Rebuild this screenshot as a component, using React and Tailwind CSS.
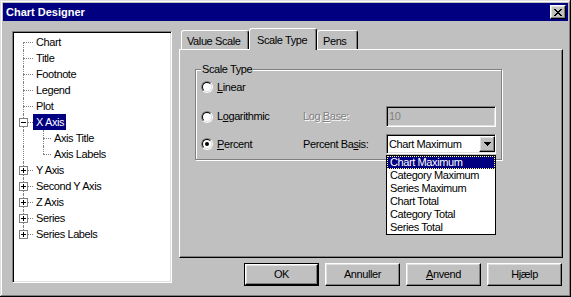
const raised =
  "bg-[#c0c0c0] border border-t-white border-l-white border-r-black border-b-black shadow-[inset_-1px_-1px_#808080,inset_1px_1px_#dfdfdf]";
const sunken =
  "border border-t-[#808080] border-l-[#808080] border-r-white border-b-white shadow-[inset_1px_1px_#000,inset_-1px_-1px_#dfdfdf]";

const treeItems = [
  { label: "Chart", first: true },
  { label: "Title" },
  { label: "Footnote" },
  { label: "Legend" },
  { label: "Plot" },
  { label: "X Axis", toggle: "minus", selected: true },
  { label: "Axis Title", child: true },
  { label: "Axis Labels", child: true, lastChild: true },
  { label: "Y Axis", toggle: "plus" },
  { label: "Second Y Axis", toggle: "plus" },
  { label: "Z Axis", toggle: "plus" },
  { label: "Series", toggle: "plus" },
  { label: "Series Labels", toggle: "plus", last: true }
];

const tabs = [
  { label: "Value Scale", width: "w-[68px]" },
  { label: "Scale Type", width: "w-[68px]", active: true },
  { label: "Pens", width: "w-[41px]" }
];

const basisOptions = [
  "Chart Maximum",
  "Category Maximum",
  "Series Maximum",
  "Chart Total",
  "Category Total",
  "Series Total"
];

// pixel rows of the close glyph: [y, x, width]
const closeGlyph = [
  [0, 0, 2], [0, 6, 2],
  [1, 1, 2], [1, 5, 2],
  [2, 2, 4],
  [3, 3, 2],
  [4, 2, 4],
  [5, 1, 2], [5, 5, 2],
  [6, 0, 2], [6, 6, 2]
];

function ToggleBox({ kind }) {
  return (
    <span className="absolute left-[5px] top-[4px] flex h-[9px] w-[9px] items-center justify-center border border-[#808080] bg-white">
      <svg width="5" height="5" viewBox="0 0 5 5" shapeRendering="crispEdges">
        <rect x="0" y="2" width="5" height="1" fill="#000" />
        {kind === "plus" && <rect x="2" y="0" width="1" height="5" fill="#000" />}
      </svg>
    </span>
  );
}

function TreeRow({ item }) {
  const rootLine = item.first
    ? "top-2 bottom-0"
    : item.last
      ? "top-0 h-2"
      : "top-0 bottom-0";

  return (
    <div className="flex h-4 items-center">
      <div className={`relative h-4 shrink-0 ${item.child ? "w-[37px]" : "w-[19px]"}`}>
        <span className={`absolute left-[9px] w-0 border-l border-dotted border-[#808080] ${rootLine}`} />
        {item.child ? (
          <>
            <span
              className={`absolute left-[29px] w-0 border-l border-dotted border-[#808080] ${item.lastChild ? "top-0 h-2" : "top-0 bottom-0"}`}
            />
            <span className="absolute left-[29px] top-2 w-[8px] border-t border-dotted border-[#808080]" />
          </>
        ) : (
          <span className="absolute left-[9px] top-2 w-[10px] border-t border-dotted border-[#808080]" />
        )}
        {item.toggle && <ToggleBox kind={item.toggle} />}
      </div>
      <span
        className={`flex h-4 items-center pl-[3px] pr-[2px] ${item.selected ? "bg-[#000080] text-white" : ""}`}
      >
        {item.label}
      </span>
    </div>
  );
}

function Radio({ checked }) {
  return (
    <span className="flex h-3 w-3 shrink-0 rounded-full border border-t-[#808080] border-l-[#808080] border-r-white border-b-white">
      <span className="flex h-full w-full items-center justify-center rounded-full border border-t-black border-l-black border-r-[#dfdfdf] border-b-[#dfdfdf] bg-white">
        {checked && <span className="h-1 w-1 rounded-full bg-black" />}
      </span>
    </span>
  );
}

function RadioLabel({ checked, before, mark, after, className = "" }) {
  return (
    <div className={`flex items-center ${className}`}>
      <Radio checked={checked} />
      <span className="ml-[4px]">
        {before}
        <span className="underline underline-offset-[1px]">{mark}</span>
        {after}
      </span>
    </div>
  );
}

function Button({ children, isDefault }) {
  if (isDefault) {
    return (
      <div className="h-[23px] w-[75px] border border-black">
        <div className={`flex h-full w-full items-center justify-center ${raised}`}>{children}</div>
      </div>
    );
  }
  return <div className={`flex h-[23px] w-[75px] items-center justify-center ${raised}`}>{children}</div>;
}

export default function App() {
  return (
    <div className="flex h-[297px] w-[571px] flex-col bg-[#c0c0c0] p-[3px] font-['Liberation_Sans',Arial,sans-serif] text-[11px] leading-none tracking-[-0.4px] text-black shadow-[inset_-1px_-1px_#000,inset_1px_1px_#dfdfdf,inset_-2px_-2px_#808080,inset_2px_2px_#fff]">
      <div className="flex h-[18px] shrink-0 items-center justify-between bg-[#000080] pl-[3px] pr-[2px]">
        <span className="text-[11px] font-bold tracking-normal text-white">Chart Designer</span>
        <div className={`flex h-[14px] w-[16px] items-center justify-center ${raised}`}>
          <svg width="8" height="7" viewBox="0 0 8 7" shapeRendering="crispEdges">
            {closeGlyph.map(([y, x, w]) => (
              <rect key={`${y}-${x}`} x={x} y={y} width={w} height="1" fill="#000" />
            ))}
          </svg>
        </div>
      </div>

      <div className="flex flex-1 pl-[9px] pr-[4px] pt-[7px]">
        <div className={`mt-[3px] h-[252px] w-[160px] shrink-0 bg-white pl-px pt-px ${sunken}`}>
          <div className="pt-px">
            {treeItems.map((item) => (
              <TreeRow key={item.label} item={item} />
            ))}
          </div>
        </div>

        <div className="ml-[7px] flex w-[384px] flex-col">
          <div className="flex h-[21px] items-end pl-[2px]">
            {tabs.map((tab) =>
              tab.active ? (
                <div
                  key={tab.label}
                  className={`relative z-10 -mb-px flex h-[22px] items-start rounded-t-[3px] border-l border-r border-t border-l-white border-r-black border-t-white bg-[#c0c0c0] pl-[7px] pt-[6px] shadow-[inset_-1px_0_#808080] ${tab.width}`}
                >
                  {tab.label}
                </div>
              ) : (
                <div
                  key={tab.label}
                  className={`flex h-[19px] items-start rounded-t-[3px] border-l border-r border-t border-l-white border-r-black border-t-white pl-[5px] pt-[5px] shadow-[inset_-1px_0_#808080] ${tab.width}`}
                >
                  {tab.label}
                </div>
              )
            )}
          </div>

          <div className="h-[209px] border border-t-white border-l-white border-r-black border-b-black shadow-[inset_-1px_-1px_#808080]">
            <div className="relative ml-[15px] mt-[19px] h-[91px] w-[307px] border border-[#808080] pl-[5px] pt-[9px] shadow-[inset_1px_1px_#fff,1px_1px_#fff]">
              <span className="absolute -top-[7px] left-[5px] bg-[#c0c0c0] px-px leading-[13px]">Scale Type</span>

              <RadioLabel className="h-4" before="" mark="L" after="inear" />

              <div className="mt-[11px] flex h-[21px] items-center">
                <RadioLabel className="w-[102px]" before="L" mark="o" after="garithmic" />
                <span className="w-[83px] text-[#808080] [text-shadow:1px_1px_0_#fff]">
                  Log <span className="underline underline-offset-[1px]">B</span>ase:
                </span>
                <div className={`flex h-[21px] w-[110px] items-center bg-[#c0c0c0] pl-[2px] text-[#808080] ${sunken}`}>
                  10
                </div>
              </div>

              <div className="mt-[7px] flex h-5 items-center">
                <RadioLabel className="w-[102px]" checked before="" mark="P" after="ercent" />
                <span className="w-[83px]">
                  Percent Ba<span className="underline underline-offset-[1px]">s</span>is:
                </span>
                <div className="relative h-5 w-[110px]">
                  <div className={`flex h-5 w-[110px] items-center bg-white pl-[2px] ${sunken}`}>
                    <span className="flex-1">Chart Maximum</span>
                    <div className={`flex h-4 w-4 items-center justify-center ${raised}`}>
                      <svg width="7" height="4" viewBox="0 0 7 4" shapeRendering="crispEdges">
                        <path d="M0 0h7v1H6v1H5v1H4v1H3V3H2V2H1V1H0z" fill="#000" />
                      </svg>
                    </div>
                  </div>
                  <div className="absolute left-0 top-[21px] z-20 w-[110px] border border-black bg-white">
                    {basisOptions.map((option, index) => (
                      <div
                        key={option}
                        className={
                          index === 0
                            ? "flex h-[13px] items-center bg-[#000080] pl-[3px] text-white outline-1 -outline-offset-1 outline-dotted outline-[#ffff80]"
                            : "flex h-[13px] items-center pl-[3px]"
                        }
                      >
                        {option}
                      </div>
                    ))}
                  </div>
                </div>
              </div>
            </div>
          </div>

          <div className="mt-[5px] flex justify-end gap-[6px] pr-px">
            <Button isDefault>OK</Button>
            <Button>Annuller</Button>
            <Button>
              <span>
                <span className="underline underline-offset-[1px]">A</span>nvend
              </span>
            </Button>
            <Button>Hjælp</Button>
          </div>
        </div>
      </div>
    </div>
  );
}
